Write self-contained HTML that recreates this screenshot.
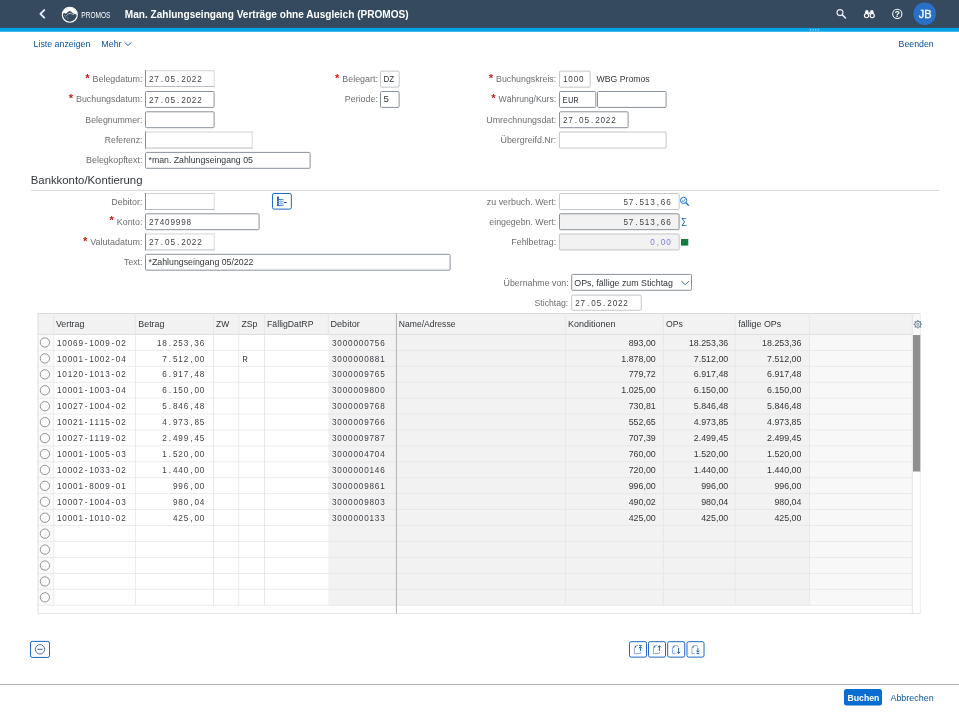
<!DOCTYPE html>
<html lang="de"><head><meta charset="utf-8"><title>Man. Zahlungseingang Verträge ohne Ausgleich (PROMOS)</title>
<style>
html,body{margin:0;padding:0;background:#fff;}
body{width:959px;height:719px;overflow:hidden;font-family:"Liberation Sans",sans-serif;font-size:9px;}
svg{display:block;position:absolute;left:0;top:0;will-change:transform;}
text{white-space:pre;}
</style></head>
<body>
<svg width="959" height="719" viewBox="0 0 959 719">
<rect x="0" y="0" width="959" height="28" fill="#354a5f"/>
<rect x="0" y="27.9" width="959" height="3.85" fill="#06a2e6"/>
<rect x="809.9" y="28.8" width="1.15" height="2" fill="#7cc8ff"/>
<rect x="812.52" y="28.8" width="1.15" height="2" fill="#7cc8ff"/>
<rect x="815.14" y="28.8" width="1.15" height="2" fill="#7cc8ff"/>
<rect x="817.76" y="28.8" width="1.15" height="2" fill="#7cc8ff"/>
<path d="M44.2 10.1 L40.4 13.9 L44.2 17.7" fill="none" stroke="#e3f0ff" stroke-width="1.9" stroke-linecap="round" stroke-linejoin="round"/>
<g transform="translate(61.6 6.5)">
<circle cx="8.2" cy="8.2" r="7.5" fill="none" stroke="#fff" stroke-width="1.1"/>
<path d="M0.95 7.4 A7.3 7.3 0 0 1 15.5 8.3 L15 7.9 L13.2 7.4 L11.2 6.4 L9.4 5 L8 4.4 L6.2 5.6 L4.4 7.3 L2.6 6.6 Z" fill="#fff"/>
<path d="M4.9 9 L6.6 7.6 L8.6 6.7 L10.4 7.6 L12.4 8" fill="none" stroke="#dfe8f2" stroke-width="0.7"/>
<path d="M2.4 8.4 L3.2 9.2 M5.6 11.4 L6.6 12 M3.6 10.6 L4.6 9.8" fill="none" stroke="#c9d6e4" stroke-width="0.7"/>
</g>
<text y="18.2" font-family="Liberation Sans" font-size="9.6" fill="#fff" x="81.35" textLength="29.1" lengthAdjust="spacingAndGlyphs">PROMOS</text>
<text y="17.6" font-family="Liberation Sans" font-size="10.3" fill="#fff" font-weight="bold" x="124.75" textLength="283.9" lengthAdjust="spacingAndGlyphs">Man. Zahlungseingang Verträge ohne Ausgleich (PROMOS)</text>
<g fill="none" stroke="#e8f0f8"><circle cx="840" cy="12.6" r="3.0" stroke-width="1.1"/><path d="M842.3 14.9 L845.5 18.0" stroke-width="1.5" stroke-linecap="round"/></g>
<g fill="#fff" stroke="none"><path d="M865.6 10.2 h2.6 l0.5 3.4 h-3.9 Z M870.5 10.2 h2.6 l0.8 3.4 h-3.9 Z"/><rect x="868.4" y="12.4" width="1.9" height="1.6"/></g>
<g fill="none" stroke="#fff" stroke-width="1.15"><circle cx="866.5" cy="15.6" r="2.1"/><circle cx="872.2" cy="15.6" r="2.1"/></g>
<circle cx="897.3" cy="13.9" r="4.6" fill="none" stroke="#fff" stroke-width="1.05"/>
<text y="16.9" font-family="Liberation Sans" font-size="8.4" fill="#fff" font-weight="bold" x="894.85">?</text>
<circle cx="924.7" cy="13.8" r="11.3" fill="#2a70c6"/>
<text y="17.9" font-family="Liberation Sans" font-size="11" fill="#fff" x="918.65" textLength="12.9" lengthAdjust="spacingAndGlyphs" stroke="#fff" stroke-width="0.3">JB</text>
<text y="46.5" font-family="Liberation Sans" font-size="9" fill="#0854a0" x="33.55" textLength="56.8" lengthAdjust="spacingAndGlyphs">Liste anzeigen</text>
<text y="46.5" font-family="Liberation Sans" font-size="9" fill="#0854a0" x="101.3" textLength="20.25" lengthAdjust="spacingAndGlyphs">Mehr</text>
<path d="M124.6 42.3 L128 45.6 L131.4 42.3" fill="none" stroke="#0854a0" stroke-width="0.9"/>
<text y="46.5" font-family="Liberation Sans" font-size="9" fill="#0854a0" x="898.55" textLength="35.1" lengthAdjust="spacingAndGlyphs">Beenden</text>
<text y="82.1" font-family="Liberation Sans" font-size="9" fill="#6a6d70" x="92.55" textLength="49.9" lengthAdjust="spacingAndGlyphs">Belegdatum:</text>
<text transform="translate(85.15 81.8) scale(0.999 1)" font-family="Liberation Sans" font-size="11.2" font-weight="bold" fill="#cc1919">*</text>
<rect x="145" y="70.3" width="69.6" height="16.6" fill="#fff"/>
<rect x="145" y="70.3" width="69.6" height="0.9" fill="#cbcdd0"/>
<rect x="213.7" y="70.3" width="0.9" height="16.6" fill="#d3d5d8"/>
<rect x="145" y="86" width="69.6" height="0.9" fill="#b3b7bb"/>
<rect x="145" y="70.3" width="1" height="16.6" fill="#868c93"/>
<text transform="translate(149 81.8) scale(0.88 1)" y="0" x="2.62 8.7 14.78 20.86 26.94 33.02 39.1 45.18 51.26 57.34" text-anchor="middle" font-family="Liberation Sans" font-size="9.3" fill="#3b3f44">27.05.2022</text>
<text y="102.4" font-family="Liberation Sans" font-size="9" fill="#6a6d70" x="76.05" textLength="66.4" lengthAdjust="spacingAndGlyphs">Buchungsdatum:</text>
<text transform="translate(68.65 102.1) scale(0.999 1)" font-family="Liberation Sans" font-size="11.2" font-weight="bold" fill="#cc1919">*</text>
<rect x="145.5" y="91.5" width="68.6" height="15.9" rx="1" fill="#fff" stroke="#89919a" stroke-width="1"/>
<text transform="translate(149 102.5) scale(0.88 1)" y="0" x="2.62 8.7 14.78 20.86 26.94 33.02 39.1 45.18 51.26 57.34" text-anchor="middle" font-family="Liberation Sans" font-size="9.3" fill="#3b3f44">27.05.2022</text>
<text y="122.7" font-family="Liberation Sans" font-size="9" fill="#6a6d70" x="85.3" textLength="57.15" lengthAdjust="spacingAndGlyphs">Belegnummer:</text>
<rect x="145.5" y="111.8" width="68.6" height="15.9" rx="1" fill="#fff" stroke="#89919a" stroke-width="1"/>
<text y="143" font-family="Liberation Sans" font-size="9" fill="#6a6d70" x="104.8" textLength="37.65" lengthAdjust="spacingAndGlyphs">Referenz:</text>
<rect x="145" y="131.6" width="107.6" height="16.9" fill="#fff"/>
<rect x="145" y="131.6" width="107.6" height="0.9" fill="#cbcdd0"/>
<rect x="251.7" y="131.6" width="0.9" height="16.9" fill="#d3d5d8"/>
<rect x="145" y="147.6" width="107.6" height="0.9" fill="#b3b7bb"/>
<rect x="145" y="131.6" width="1" height="16.9" fill="#868c93"/>
<text y="163.3" font-family="Liberation Sans" font-size="9" fill="#6a6d70" x="86.05" textLength="56.4" lengthAdjust="spacingAndGlyphs">Belegkopftext:</text>
<rect x="145.5" y="152.4" width="164.6" height="15.9" rx="1" fill="#fff" stroke="#89919a" stroke-width="1"/>
<text y="163.2" font-family="Liberation Sans" font-size="9" fill="#32363a" x="148.55" textLength="104.3" lengthAdjust="spacingAndGlyphs">*man. Zahlungseingang 05</text>
<text y="82.1" font-family="Liberation Sans" font-size="9" fill="#6a6d70" x="342.3" textLength="35.65" lengthAdjust="spacingAndGlyphs">Belegart:</text>
<text transform="translate(334.9 81.8) scale(0.999 1)" font-family="Liberation Sans" font-size="11.2" font-weight="bold" fill="#cc1919">*</text>
<rect x="380.45" y="71.15" width="18.7" height="16" rx="1" fill="#fff" stroke="#bcbfc3" stroke-width="0.9"/>
<text y="82" font-family="Liberation Sans" font-size="9" fill="#32363a" x="383.55" textLength="10.65" lengthAdjust="spacingAndGlyphs">DZ</text>
<text y="102.4" font-family="Liberation Sans" font-size="9" fill="#6a6d70" x="344.8" textLength="33.15" lengthAdjust="spacingAndGlyphs">Periode:</text>
<rect x="380.5" y="91.5" width="18.6" height="15.9" rx="1" fill="#fff" stroke="#89919a" stroke-width="1"/>
<text y="102.3" font-family="Liberation Sans" font-size="9" fill="#32363a" x="383.55" textLength="5.4" lengthAdjust="spacingAndGlyphs">5</text>
<text y="82.1" font-family="Liberation Sans" font-size="9" fill="#6a6d70" x="496.05" textLength="60.15" lengthAdjust="spacingAndGlyphs">Buchungskreis:</text>
<text transform="translate(488.65 81.8) scale(0.999 1)" font-family="Liberation Sans" font-size="11.2" font-weight="bold" fill="#cc1919">*</text>
<rect x="559.45" y="71.15" width="30.7" height="16" rx="1" fill="#fff" stroke="#bcbfc3" stroke-width="0.9"/>
<text transform="translate(563 82.2) scale(0.88 1)" y="0" x="2.62 8.7 14.78 20.86" text-anchor="middle" font-family="Liberation Sans" font-size="9.3" fill="#3b3f44">1000</text>
<text y="82.1" font-family="Liberation Sans" font-size="9" fill="#32363a" x="596.55" textLength="53.15" lengthAdjust="spacingAndGlyphs">WBG Promos</text>
<text y="102.4" font-family="Liberation Sans" font-size="9" fill="#6a6d70" x="498.55" textLength="57.65" lengthAdjust="spacingAndGlyphs">Währung/Kurs:</text>
<text transform="translate(491.15 102.1) scale(0.999 1)" font-family="Liberation Sans" font-size="11.2" font-weight="bold" fill="#cc1919">*</text>
<rect x="559.5" y="91.5" width="36.3" height="15.9" rx="1" fill="#fff" stroke="#89919a" stroke-width="1"/>
<text y="102.5" font-family="Liberation Mono" font-size="9.6" fill="#3b3f44" x="562.55" textLength="16.2" lengthAdjust="spacingAndGlyphs">EUR</text>
<rect x="597.5" y="91.5" width="68.6" height="15.9" rx="1" fill="#fff" stroke="#89919a" stroke-width="1"/>
<text y="122.7" font-family="Liberation Sans" font-size="9" fill="#6a6d70" x="486.3" textLength="69.9" lengthAdjust="spacingAndGlyphs">Umrechnungsdat:</text>
<rect x="559.5" y="111.8" width="68.6" height="15.9" rx="1" fill="#fff" stroke="#89919a" stroke-width="1"/>
<text transform="translate(563 122.8) scale(0.88 1)" y="0" x="2.62 8.7 14.78 20.86 26.94 33.02 39.1 45.18 51.26 57.34" text-anchor="middle" font-family="Liberation Sans" font-size="9.3" fill="#3b3f44">27.05.2022</text>
<text y="143" font-family="Liberation Sans" font-size="9" fill="#6a6d70" x="500.55" textLength="55.65" lengthAdjust="spacingAndGlyphs">Übergreifd.Nr:</text>
<rect x="559.45" y="132.05" width="106.7" height="16" rx="1" fill="#fff" stroke="#bcbfc3" stroke-width="0.9"/>
<text y="183.8" font-family="Liberation Sans" font-size="11.3" fill="#32363a" x="30.75" textLength="111.7" lengthAdjust="spacingAndGlyphs">Bankkonto/Kontierung</text>
<rect x="31" y="189.9" width="908.5" height="1" fill="#d9d9d9"/>
<text y="204.5" font-family="Liberation Sans" font-size="9" fill="#6a6d70" x="111.3" textLength="31.15" lengthAdjust="spacingAndGlyphs">Debitor:</text>
<rect x="145" y="193.1" width="69.6" height="16.9" fill="#fff"/>
<rect x="145" y="193.1" width="69.6" height="0.9" fill="#cbcdd0"/>
<rect x="213.7" y="193.1" width="0.9" height="16.9" fill="#d3d5d8"/>
<rect x="145" y="209.1" width="69.6" height="0.9" fill="#b3b7bb"/>
<rect x="145" y="193.1" width="1" height="16.9" fill="#868c93"/>
<text y="224.7" font-family="Liberation Sans" font-size="9" fill="#6a6d70" x="116.85" textLength="25.6" lengthAdjust="spacingAndGlyphs">Konto:</text>
<text transform="translate(109.45 224.4) scale(0.999 1)" font-family="Liberation Sans" font-size="11.2" font-weight="bold" fill="#cc1919">*</text>
<rect x="145.5" y="213.8" width="113.6" height="15.9" rx="1" fill="#fff" stroke="#89919a" stroke-width="1"/>
<text transform="translate(149 224.8) scale(0.88 1)" y="0" x="2.62 8.7 14.78 20.86 26.94 33.02 39.1 45.18" text-anchor="middle" font-family="Liberation Sans" font-size="9.3" fill="#3b3f44">27409998</text>
<text y="244.9" font-family="Liberation Sans" font-size="9" fill="#6a6d70" x="90.3" textLength="52.15" lengthAdjust="spacingAndGlyphs">Valutadatum:</text>
<text transform="translate(82.9 244.6) scale(0.999 1)" font-family="Liberation Sans" font-size="11.2" font-weight="bold" fill="#cc1919">*</text>
<rect x="145" y="233.5" width="69.6" height="16.9" fill="#fff"/>
<rect x="145" y="233.5" width="69.6" height="0.9" fill="#cbcdd0"/>
<rect x="213.7" y="233.5" width="0.9" height="16.9" fill="#d3d5d8"/>
<rect x="145" y="249.5" width="69.6" height="0.9" fill="#b3b7bb"/>
<rect x="145" y="233.5" width="1" height="16.9" fill="#868c93"/>
<text transform="translate(149 245) scale(0.88 1)" y="0" x="2.62 8.7 14.78 20.86 26.94 33.02 39.1 45.18 51.26 57.34" text-anchor="middle" font-family="Liberation Sans" font-size="9.3" fill="#3b3f44">27.05.2022</text>
<text y="265.2" font-family="Liberation Sans" font-size="9" fill="#6a6d70" x="124.05" textLength="18.4" lengthAdjust="spacingAndGlyphs">Text:</text>
<rect x="145.5" y="254.3" width="304.6" height="15.9" rx="1" fill="#fff" stroke="#89919a" stroke-width="1"/>
<text y="265.1" font-family="Liberation Sans" font-size="9" fill="#32363a" x="148.55" textLength="104.9" lengthAdjust="spacingAndGlyphs">*Zahlungseingang 05/2022</text>
<rect x="272.48" y="193.47" width="18.85" height="15.65" rx="1.7" fill="#fff" stroke="#0f5fc0" stroke-width="0.95"/>
<g><rect x="277.1" y="196.5" width="1.7" height="9.5" fill="#0b55a8"/><rect x="277.1" y="199.0" width="6.3" height="0.9" fill="#2a6cc0"/><rect x="277.1" y="201.2" width="6.3" height="0.8" fill="#7fa6dc"/><rect x="277.1" y="203.3" width="6.3" height="0.8" fill="#7fa6dc"/><rect x="277.1" y="205.2" width="6.3" height="0.9" fill="#2a6cc0"/><rect x="280.6" y="199.0" width="0.8" height="7" fill="#7fa6dc"/><rect x="282.7" y="199.0" width="0.7" height="7" fill="#9dbce6"/><rect x="284.0" y="202.0" width="2.6" height="1.0" fill="#2b3fc0"/></g>
<text y="204.5" font-family="Liberation Sans" font-size="9" fill="#6a6d70" x="486.8" textLength="69.4" lengthAdjust="spacingAndGlyphs">zu verbuch. Wert:</text>
<rect x="559.45" y="193.55" width="119.7" height="16" rx="1" fill="#fff" stroke="#bcbfc3" stroke-width="0.9"/>
<text transform="translate(623.4 204.6) scale(0.88 1)" y="0" x="2.62 8.7 14.78 20.86 26.94 33.02 39.1 45.18 51.26" text-anchor="middle" font-family="Liberation Sans" font-size="9.3" fill="#3b3f44">57.513,66</text>
<text y="224.7" font-family="Liberation Sans" font-size="9" fill="#6a6d70" x="489.3" textLength="66.9" lengthAdjust="spacingAndGlyphs">eingegebn. Wert:</text>
<rect x="559.5" y="213.8" width="119.6" height="15.9" rx="1" fill="#f2f2f2" stroke="#89919a" stroke-width="1"/>
<text transform="translate(623.4 224.8) scale(0.88 1)" y="0" x="2.62 8.7 14.78 20.86 26.94 33.02 39.1 45.18 51.26" text-anchor="middle" font-family="Liberation Sans" font-size="9.3" fill="#3b3f44">57.513,66</text>
<text y="244.9" font-family="Liberation Sans" font-size="9" fill="#6a6d70" x="511.3" textLength="44.9" lengthAdjust="spacingAndGlyphs">Fehlbetrag:</text>
<rect x="559.45" y="233.95" width="119.7" height="16" rx="1" fill="#f2f2f2" stroke="#bcbfc3" stroke-width="0.9"/>
<text transform="translate(650.15 245) scale(0.88 1)" y="0" x="2.62 8.7 14.78 20.86" text-anchor="middle" font-family="Liberation Sans" font-size="9.3" fill="#7d7de0">0,00</text>
<g fill="none" stroke="#0a6ed1"><circle cx="683.6" cy="200.4" r="3.1" stroke-width="1"/><path d="M686 202.8 L688.8 205.6" stroke-width="1.3"/><path d="M682 200.6 L683.2 201.6 L685.2 199.2" stroke-width="0.8"/></g>
<text y="225.9" font-family="Liberation Sans" font-size="10.2" fill="#1a5fb0" x="681.15" textLength="5.7" lengthAdjust="spacingAndGlyphs">Σ</text>
<rect x="681" y="239" width="7.3" height="6.6" fill="#107e3e"/>
<text y="285.8" font-family="Liberation Sans" font-size="9" fill="#6a6d70" x="503.55" textLength="65.15" lengthAdjust="spacingAndGlyphs">Übernahme von:</text>
<rect x="571.7" y="274.4" width="119.8" height="15.9" rx="1" fill="#fff" stroke="#89919a" stroke-width="1"/>
<text y="285.8" font-family="Liberation Sans" font-size="9" fill="#32363a" x="574.3" textLength="98.65" lengthAdjust="spacingAndGlyphs">OPs, fällige zum Stichtag</text>
<path d="M681.5 281.2 L685.2 284.7 L688.9 281.2" fill="none" stroke="#3f5b84" stroke-width="0.95"/>
<text y="305.9" font-family="Liberation Sans" font-size="9" fill="#6a6d70" x="534.55" textLength="33.65" lengthAdjust="spacingAndGlyphs">Stichtag:</text>
<rect x="571.65" y="295.15" width="69.6" height="15.1" rx="1" fill="#fff" stroke="#bcbfc3" stroke-width="0.9"/>
<text transform="translate(575.2 306.2) scale(0.88 1)" y="0" x="2.62 8.7 14.78 20.86 26.94 33.02 39.1 45.18 51.26 57.34" text-anchor="middle" font-family="Liberation Sans" font-size="9.3" fill="#3b3f44">27.05.2022</text>
<rect x="37.5" y="313" width="874.8" height="21.4" fill="#f2f2f2"/>
<rect x="37.5" y="334.4" width="16.3" height="270.81" fill="#fafafa"/>
<rect x="912.3" y="313" width="8" height="21.4" fill="#f8f8f8"/>
<rect x="328.3" y="334.4" width="481" height="270.81" fill="#f2f2f2"/>
<rect x="809.3" y="334.4" width="103" height="270.81" fill="#f8f8f8"/>
<rect x="37.5" y="313" width="882.8" height="1" fill="#d9d9d9"/>
<rect x="37.5" y="333.9" width="874.8" height="1" fill="#dedede"/>
<rect x="37.5" y="349.93" width="874.8" height="0.8" fill="#e6e6e6"/>
<rect x="37.5" y="365.86" width="874.8" height="0.8" fill="#e6e6e6"/>
<rect x="37.5" y="381.79" width="874.8" height="0.8" fill="#e6e6e6"/>
<rect x="37.5" y="397.72" width="874.8" height="0.8" fill="#e6e6e6"/>
<rect x="37.5" y="413.65" width="874.8" height="0.8" fill="#e6e6e6"/>
<rect x="37.5" y="429.58" width="874.8" height="0.8" fill="#e6e6e6"/>
<rect x="37.5" y="445.51" width="874.8" height="0.8" fill="#e6e6e6"/>
<rect x="37.5" y="461.44" width="874.8" height="0.8" fill="#e6e6e6"/>
<rect x="37.5" y="477.37" width="874.8" height="0.8" fill="#e6e6e6"/>
<rect x="37.5" y="493.3" width="874.8" height="0.8" fill="#e6e6e6"/>
<rect x="37.5" y="509.23" width="874.8" height="0.8" fill="#e6e6e6"/>
<rect x="37.5" y="525.16" width="874.8" height="0.8" fill="#e6e6e6"/>
<rect x="37.5" y="541.09" width="874.8" height="0.8" fill="#e6e6e6"/>
<rect x="37.5" y="557.02" width="874.8" height="0.8" fill="#e6e6e6"/>
<rect x="37.5" y="572.95" width="874.8" height="0.8" fill="#e6e6e6"/>
<rect x="37.5" y="588.88" width="874.8" height="0.8" fill="#e6e6e6"/>
<rect x="37.5" y="604.81" width="874.8" height="0.8" fill="#e6e6e6"/>
<rect x="37.5" y="613" width="882.8" height="1" fill="#e5e5e5"/>
<rect x="37.5" y="313" width="1" height="300.5" fill="#e0e0e0"/>
<rect x="53.4" y="313" width="0.8" height="292.21" fill="#e4e4e4"/>
<rect x="134.9" y="313" width="0.8" height="292.21" fill="#e4e4e4"/>
<rect x="213" y="313" width="0.8" height="292.21" fill="#e4e4e4"/>
<rect x="238.4" y="313" width="0.8" height="292.21" fill="#e4e4e4"/>
<rect x="264" y="313" width="0.8" height="292.21" fill="#e4e4e4"/>
<rect x="327.8" y="313" width="1" height="21.4" fill="#e5e5e5"/>
<rect x="395.9" y="313" width="1.1" height="300.5" fill="#b8b8b8"/>
<rect x="564.9" y="313" width="0.8" height="292.21" fill="#e4e4e4"/>
<rect x="662.9" y="313" width="0.8" height="292.21" fill="#e4e4e4"/>
<rect x="734.7" y="313" width="0.8" height="292.21" fill="#e4e4e4"/>
<rect x="808.9" y="313" width="0.8" height="292.21" fill="#e4e4e4"/>
<rect x="911.8" y="313" width="1" height="300.5" fill="#e5e5e5"/>
<rect x="919.8" y="313" width="1" height="300.5" fill="#ececec"/>
<text y="326.7" font-family="Liberation Sans" font-size="9" fill="#32363a" x="55.95" textLength="28.4" lengthAdjust="spacingAndGlyphs">Vertrag</text>
<text y="326.7" font-family="Liberation Sans" font-size="9" fill="#32363a" x="138.3" textLength="26.15" lengthAdjust="spacingAndGlyphs">Betrag</text>
<text y="326.7" font-family="Liberation Sans" font-size="9" fill="#32363a" x="216.05" textLength="13.15" lengthAdjust="spacingAndGlyphs">ZW</text>
<text y="326.7" font-family="Liberation Sans" font-size="9" fill="#32363a" x="241.55" textLength="15.9" lengthAdjust="spacingAndGlyphs">ZSp</text>
<text y="326.7" font-family="Liberation Sans" font-size="9" fill="#32363a" x="267.05" textLength="46.4" lengthAdjust="spacingAndGlyphs">FälligDatRP</text>
<text y="326.7" font-family="Liberation Sans" font-size="9" fill="#32363a" x="330.55" textLength="29.15" lengthAdjust="spacingAndGlyphs">Debitor</text>
<text y="326.7" font-family="Liberation Sans" font-size="9" fill="#32363a" x="398.8" textLength="56.65" lengthAdjust="spacingAndGlyphs">Name/Adresse</text>
<text y="326.7" font-family="Liberation Sans" font-size="9" fill="#32363a" x="568.05" textLength="47.4" lengthAdjust="spacingAndGlyphs">Konditionen</text>
<text y="326.7" font-family="Liberation Sans" font-size="9" fill="#32363a" x="666.05" textLength="16.9" lengthAdjust="spacingAndGlyphs">OPs</text>
<text y="326.7" font-family="Liberation Sans" font-size="9" fill="#32363a" x="738.3" textLength="42.9" lengthAdjust="spacingAndGlyphs">fällige OPs</text>
<g fill="none" stroke="#6a7d92"><circle cx="917.8" cy="324.3" r="3" stroke-width="1"/><circle cx="917.8" cy="324.3" r="1.1" stroke-width="0.8"/><path d="M917.8 320 v1.2 M917.8 327.4 v1.2 M913.5 324.3 h1.2 M920.9 324.3 h1.2 M914.8 321.3 l0.8 0.8 M920 326.5 l0.8 0.8 M914.8 327.3 l0.8 -0.8 M920 322.1 l0.8 -0.8" stroke-width="1.1"/></g>
<rect x="913" y="335" width="7.3" height="136.5" fill="#8f8f8f"/>
<circle cx="44.9" cy="342.5" r="4.65" fill="#fff" stroke="#81868c" stroke-width="0.9"/>
<text transform="translate(57 345.6) scale(0.88 1)" y="0" x="2.62 8.7 14.78 20.86 26.94 33.02 39.1 45.18 51.26 57.34 63.41 69.49 75.57" text-anchor="middle" font-family="Liberation Sans" font-size="9.3" fill="#3b3f44">10069-1009-02</text>
<text transform="translate(156.9 345.6) scale(0.88 1)" y="0" x="2.62 8.7 14.78 20.86 26.94 33.02 39.1 45.18 51.26" text-anchor="middle" font-family="Liberation Sans" font-size="9.3" fill="#3b3f44">18.253,36</text>
<text transform="translate(332 345.6) scale(0.88 1)" y="0" x="2.62 8.7 14.78 20.86 26.94 33.02 39.1 45.18 51.26 57.34" text-anchor="middle" font-family="Liberation Sans" font-size="9.3" fill="#3b3f44">3000000756</text>
<text y="345.6" font-family="Liberation Sans" font-size="8.85" fill="#32363a" x="655.75" text-anchor="end">893,00</text>
<text y="345.6" font-family="Liberation Sans" font-size="8.85" fill="#32363a" x="728.25" text-anchor="end">18.253,36</text>
<text y="345.6" font-family="Liberation Sans" font-size="8.85" fill="#32363a" x="801.45" text-anchor="end">18.253,36</text>
<circle cx="44.9" cy="358.43" r="4.65" fill="#fff" stroke="#81868c" stroke-width="0.9"/>
<text transform="translate(57 361.53) scale(0.88 1)" y="0" x="2.62 8.7 14.78 20.86 26.94 33.02 39.1 45.18 51.26 57.34 63.41 69.49 75.57" text-anchor="middle" font-family="Liberation Sans" font-size="9.3" fill="#3b3f44">10001-1002-04</text>
<text transform="translate(162.25 361.53) scale(0.88 1)" y="0" x="2.62 8.7 14.78 20.86 26.94 33.02 39.1 45.18" text-anchor="middle" font-family="Liberation Sans" font-size="9.3" fill="#3b3f44">7.512,00</text>
<text y="361.53" font-family="Liberation Mono" font-size="9.6" fill="#3b3f44" x="242.15" textLength="5.5" lengthAdjust="spacingAndGlyphs">R</text>
<text transform="translate(332 361.53) scale(0.88 1)" y="0" x="2.62 8.7 14.78 20.86 26.94 33.02 39.1 45.18 51.26 57.34" text-anchor="middle" font-family="Liberation Sans" font-size="9.3" fill="#3b3f44">3000000881</text>
<text y="361.53" font-family="Liberation Sans" font-size="8.85" fill="#32363a" x="655.75" text-anchor="end">1.878,00</text>
<text y="361.53" font-family="Liberation Sans" font-size="8.85" fill="#32363a" x="728.25" text-anchor="end">7.512,00</text>
<text y="361.53" font-family="Liberation Sans" font-size="8.85" fill="#32363a" x="801.45" text-anchor="end">7.512,00</text>
<circle cx="44.9" cy="374.36" r="4.65" fill="#fff" stroke="#81868c" stroke-width="0.9"/>
<text transform="translate(57 377.46) scale(0.88 1)" y="0" x="2.62 8.7 14.78 20.86 26.94 33.02 39.1 45.18 51.26 57.34 63.41 69.49 75.57" text-anchor="middle" font-family="Liberation Sans" font-size="9.3" fill="#3b3f44">10120-1013-02</text>
<text transform="translate(162.25 377.46) scale(0.88 1)" y="0" x="2.62 8.7 14.78 20.86 26.94 33.02 39.1 45.18" text-anchor="middle" font-family="Liberation Sans" font-size="9.3" fill="#3b3f44">6.917,48</text>
<text transform="translate(332 377.46) scale(0.88 1)" y="0" x="2.62 8.7 14.78 20.86 26.94 33.02 39.1 45.18 51.26 57.34" text-anchor="middle" font-family="Liberation Sans" font-size="9.3" fill="#3b3f44">3000009765</text>
<text y="377.46" font-family="Liberation Sans" font-size="8.85" fill="#32363a" x="655.75" text-anchor="end">779,72</text>
<text y="377.46" font-family="Liberation Sans" font-size="8.85" fill="#32363a" x="728.25" text-anchor="end">6.917,48</text>
<text y="377.46" font-family="Liberation Sans" font-size="8.85" fill="#32363a" x="801.45" text-anchor="end">6.917,48</text>
<circle cx="44.9" cy="390.29" r="4.65" fill="#fff" stroke="#81868c" stroke-width="0.9"/>
<text transform="translate(57 393.39) scale(0.88 1)" y="0" x="2.62 8.7 14.78 20.86 26.94 33.02 39.1 45.18 51.26 57.34 63.41 69.49 75.57" text-anchor="middle" font-family="Liberation Sans" font-size="9.3" fill="#3b3f44">10001-1003-04</text>
<text transform="translate(162.25 393.39) scale(0.88 1)" y="0" x="2.62 8.7 14.78 20.86 26.94 33.02 39.1 45.18" text-anchor="middle" font-family="Liberation Sans" font-size="9.3" fill="#3b3f44">6.150,00</text>
<text transform="translate(332 393.39) scale(0.88 1)" y="0" x="2.62 8.7 14.78 20.86 26.94 33.02 39.1 45.18 51.26 57.34" text-anchor="middle" font-family="Liberation Sans" font-size="9.3" fill="#3b3f44">3000009800</text>
<text y="393.39" font-family="Liberation Sans" font-size="8.85" fill="#32363a" x="655.75" text-anchor="end">1.025,00</text>
<text y="393.39" font-family="Liberation Sans" font-size="8.85" fill="#32363a" x="728.25" text-anchor="end">6.150,00</text>
<text y="393.39" font-family="Liberation Sans" font-size="8.85" fill="#32363a" x="801.45" text-anchor="end">6.150,00</text>
<circle cx="44.9" cy="406.22" r="4.65" fill="#fff" stroke="#81868c" stroke-width="0.9"/>
<text transform="translate(57 409.32) scale(0.88 1)" y="0" x="2.62 8.7 14.78 20.86 26.94 33.02 39.1 45.18 51.26 57.34 63.41 69.49 75.57" text-anchor="middle" font-family="Liberation Sans" font-size="9.3" fill="#3b3f44">10027-1004-02</text>
<text transform="translate(162.25 409.32) scale(0.88 1)" y="0" x="2.62 8.7 14.78 20.86 26.94 33.02 39.1 45.18" text-anchor="middle" font-family="Liberation Sans" font-size="9.3" fill="#3b3f44">5.846,48</text>
<text transform="translate(332 409.32) scale(0.88 1)" y="0" x="2.62 8.7 14.78 20.86 26.94 33.02 39.1 45.18 51.26 57.34" text-anchor="middle" font-family="Liberation Sans" font-size="9.3" fill="#3b3f44">3000009768</text>
<text y="409.32" font-family="Liberation Sans" font-size="8.85" fill="#32363a" x="655.75" text-anchor="end">730,81</text>
<text y="409.32" font-family="Liberation Sans" font-size="8.85" fill="#32363a" x="728.25" text-anchor="end">5.846,48</text>
<text y="409.32" font-family="Liberation Sans" font-size="8.85" fill="#32363a" x="801.45" text-anchor="end">5.846,48</text>
<circle cx="44.9" cy="422.15" r="4.65" fill="#fff" stroke="#81868c" stroke-width="0.9"/>
<text transform="translate(57 425.25) scale(0.88 1)" y="0" x="2.62 8.7 14.78 20.86 26.94 33.02 39.1 45.18 51.26 57.34 63.41 69.49 75.57" text-anchor="middle" font-family="Liberation Sans" font-size="9.3" fill="#3b3f44">10021-1115-02</text>
<text transform="translate(162.25 425.25) scale(0.88 1)" y="0" x="2.62 8.7 14.78 20.86 26.94 33.02 39.1 45.18" text-anchor="middle" font-family="Liberation Sans" font-size="9.3" fill="#3b3f44">4.973,85</text>
<text transform="translate(332 425.25) scale(0.88 1)" y="0" x="2.62 8.7 14.78 20.86 26.94 33.02 39.1 45.18 51.26 57.34" text-anchor="middle" font-family="Liberation Sans" font-size="9.3" fill="#3b3f44">3000009766</text>
<text y="425.25" font-family="Liberation Sans" font-size="8.85" fill="#32363a" x="655.75" text-anchor="end">552,65</text>
<text y="425.25" font-family="Liberation Sans" font-size="8.85" fill="#32363a" x="728.25" text-anchor="end">4.973,85</text>
<text y="425.25" font-family="Liberation Sans" font-size="8.85" fill="#32363a" x="801.45" text-anchor="end">4.973,85</text>
<circle cx="44.9" cy="438.08" r="4.65" fill="#fff" stroke="#81868c" stroke-width="0.9"/>
<text transform="translate(57 441.18) scale(0.88 1)" y="0" x="2.62 8.7 14.78 20.86 26.94 33.02 39.1 45.18 51.26 57.34 63.41 69.49 75.57" text-anchor="middle" font-family="Liberation Sans" font-size="9.3" fill="#3b3f44">10027-1119-02</text>
<text transform="translate(162.25 441.18) scale(0.88 1)" y="0" x="2.62 8.7 14.78 20.86 26.94 33.02 39.1 45.18" text-anchor="middle" font-family="Liberation Sans" font-size="9.3" fill="#3b3f44">2.499,45</text>
<text transform="translate(332 441.18) scale(0.88 1)" y="0" x="2.62 8.7 14.78 20.86 26.94 33.02 39.1 45.18 51.26 57.34" text-anchor="middle" font-family="Liberation Sans" font-size="9.3" fill="#3b3f44">3000009787</text>
<text y="441.18" font-family="Liberation Sans" font-size="8.85" fill="#32363a" x="655.75" text-anchor="end">707,39</text>
<text y="441.18" font-family="Liberation Sans" font-size="8.85" fill="#32363a" x="728.25" text-anchor="end">2.499,45</text>
<text y="441.18" font-family="Liberation Sans" font-size="8.85" fill="#32363a" x="801.45" text-anchor="end">2.499,45</text>
<circle cx="44.9" cy="454.01" r="4.65" fill="#fff" stroke="#81868c" stroke-width="0.9"/>
<text transform="translate(57 457.11) scale(0.88 1)" y="0" x="2.62 8.7 14.78 20.86 26.94 33.02 39.1 45.18 51.26 57.34 63.41 69.49 75.57" text-anchor="middle" font-family="Liberation Sans" font-size="9.3" fill="#3b3f44">10001-1005-03</text>
<text transform="translate(162.25 457.11) scale(0.88 1)" y="0" x="2.62 8.7 14.78 20.86 26.94 33.02 39.1 45.18" text-anchor="middle" font-family="Liberation Sans" font-size="9.3" fill="#3b3f44">1.520,00</text>
<text transform="translate(332 457.11) scale(0.88 1)" y="0" x="2.62 8.7 14.78 20.86 26.94 33.02 39.1 45.18 51.26 57.34" text-anchor="middle" font-family="Liberation Sans" font-size="9.3" fill="#3b3f44">3000004704</text>
<text y="457.11" font-family="Liberation Sans" font-size="8.85" fill="#32363a" x="655.75" text-anchor="end">760,00</text>
<text y="457.11" font-family="Liberation Sans" font-size="8.85" fill="#32363a" x="728.25" text-anchor="end">1.520,00</text>
<text y="457.11" font-family="Liberation Sans" font-size="8.85" fill="#32363a" x="801.45" text-anchor="end">1.520,00</text>
<circle cx="44.9" cy="469.94" r="4.65" fill="#fff" stroke="#81868c" stroke-width="0.9"/>
<text transform="translate(57 473.04) scale(0.88 1)" y="0" x="2.62 8.7 14.78 20.86 26.94 33.02 39.1 45.18 51.26 57.34 63.41 69.49 75.57" text-anchor="middle" font-family="Liberation Sans" font-size="9.3" fill="#3b3f44">10002-1033-02</text>
<text transform="translate(162.25 473.04) scale(0.88 1)" y="0" x="2.62 8.7 14.78 20.86 26.94 33.02 39.1 45.18" text-anchor="middle" font-family="Liberation Sans" font-size="9.3" fill="#3b3f44">1.440,00</text>
<text transform="translate(332 473.04) scale(0.88 1)" y="0" x="2.62 8.7 14.78 20.86 26.94 33.02 39.1 45.18 51.26 57.34" text-anchor="middle" font-family="Liberation Sans" font-size="9.3" fill="#3b3f44">3000000146</text>
<text y="473.04" font-family="Liberation Sans" font-size="8.85" fill="#32363a" x="655.75" text-anchor="end">720,00</text>
<text y="473.04" font-family="Liberation Sans" font-size="8.85" fill="#32363a" x="728.25" text-anchor="end">1.440,00</text>
<text y="473.04" font-family="Liberation Sans" font-size="8.85" fill="#32363a" x="801.45" text-anchor="end">1.440,00</text>
<circle cx="44.9" cy="485.87" r="4.65" fill="#fff" stroke="#81868c" stroke-width="0.9"/>
<text transform="translate(57 488.97) scale(0.88 1)" y="0" x="2.62 8.7 14.78 20.86 26.94 33.02 39.1 45.18 51.26 57.34 63.41 69.49 75.57" text-anchor="middle" font-family="Liberation Sans" font-size="9.3" fill="#3b3f44">10001-8009-01</text>
<text transform="translate(172.95 488.97) scale(0.88 1)" y="0" x="2.62 8.7 14.78 20.86 26.94 33.02" text-anchor="middle" font-family="Liberation Sans" font-size="9.3" fill="#3b3f44">996,00</text>
<text transform="translate(332 488.97) scale(0.88 1)" y="0" x="2.62 8.7 14.78 20.86 26.94 33.02 39.1 45.18 51.26 57.34" text-anchor="middle" font-family="Liberation Sans" font-size="9.3" fill="#3b3f44">3000009861</text>
<text y="488.97" font-family="Liberation Sans" font-size="8.85" fill="#32363a" x="655.75" text-anchor="end">996,00</text>
<text y="488.97" font-family="Liberation Sans" font-size="8.85" fill="#32363a" x="728.25" text-anchor="end">996,00</text>
<text y="488.97" font-family="Liberation Sans" font-size="8.85" fill="#32363a" x="801.45" text-anchor="end">996,00</text>
<circle cx="44.9" cy="501.8" r="4.65" fill="#fff" stroke="#81868c" stroke-width="0.9"/>
<text transform="translate(57 504.9) scale(0.88 1)" y="0" x="2.62 8.7 14.78 20.86 26.94 33.02 39.1 45.18 51.26 57.34 63.41 69.49 75.57" text-anchor="middle" font-family="Liberation Sans" font-size="9.3" fill="#3b3f44">10007-1004-03</text>
<text transform="translate(172.95 504.9) scale(0.88 1)" y="0" x="2.62 8.7 14.78 20.86 26.94 33.02" text-anchor="middle" font-family="Liberation Sans" font-size="9.3" fill="#3b3f44">980,04</text>
<text transform="translate(332 504.9) scale(0.88 1)" y="0" x="2.62 8.7 14.78 20.86 26.94 33.02 39.1 45.18 51.26 57.34" text-anchor="middle" font-family="Liberation Sans" font-size="9.3" fill="#3b3f44">3000009803</text>
<text y="504.9" font-family="Liberation Sans" font-size="8.85" fill="#32363a" x="655.75" text-anchor="end">490,02</text>
<text y="504.9" font-family="Liberation Sans" font-size="8.85" fill="#32363a" x="728.25" text-anchor="end">980,04</text>
<text y="504.9" font-family="Liberation Sans" font-size="8.85" fill="#32363a" x="801.45" text-anchor="end">980,04</text>
<circle cx="44.9" cy="517.73" r="4.65" fill="#fff" stroke="#81868c" stroke-width="0.9"/>
<text transform="translate(57 520.83) scale(0.88 1)" y="0" x="2.62 8.7 14.78 20.86 26.94 33.02 39.1 45.18 51.26 57.34 63.41 69.49 75.57" text-anchor="middle" font-family="Liberation Sans" font-size="9.3" fill="#3b3f44">10001-1010-02</text>
<text transform="translate(172.95 520.83) scale(0.88 1)" y="0" x="2.62 8.7 14.78 20.86 26.94 33.02" text-anchor="middle" font-family="Liberation Sans" font-size="9.3" fill="#3b3f44">425,00</text>
<text transform="translate(332 520.83) scale(0.88 1)" y="0" x="2.62 8.7 14.78 20.86 26.94 33.02 39.1 45.18 51.26 57.34" text-anchor="middle" font-family="Liberation Sans" font-size="9.3" fill="#3b3f44">3000000133</text>
<text y="520.83" font-family="Liberation Sans" font-size="8.85" fill="#32363a" x="655.75" text-anchor="end">425,00</text>
<text y="520.83" font-family="Liberation Sans" font-size="8.85" fill="#32363a" x="728.25" text-anchor="end">425,00</text>
<text y="520.83" font-family="Liberation Sans" font-size="8.85" fill="#32363a" x="801.45" text-anchor="end">425,00</text>
<circle cx="44.9" cy="533.66" r="4.65" fill="#fff" stroke="#81868c" stroke-width="0.9"/>
<circle cx="44.9" cy="549.59" r="4.65" fill="#fff" stroke="#81868c" stroke-width="0.9"/>
<circle cx="44.9" cy="565.52" r="4.65" fill="#fff" stroke="#81868c" stroke-width="0.9"/>
<circle cx="44.9" cy="581.45" r="4.65" fill="#fff" stroke="#81868c" stroke-width="0.9"/>
<circle cx="44.9" cy="597.38" r="4.65" fill="#fff" stroke="#81868c" stroke-width="0.9"/>
<rect x="30.48" y="641.38" width="19.05" height="16.05" rx="1.7" fill="#fff" stroke="#0f5fc0" stroke-width="0.95"/>
<g fill="none" stroke="#3b62a6"><circle cx="40" cy="649.3" r="4.7" stroke-width="0.9"/><path d="M37.3 649.3 H42.6" stroke-width="1"/></g>
<rect x="629.48" y="641.68" width="17.05" height="15.45" rx="1.7" fill="#fff" stroke="#0f5fc0" stroke-width="0.95"/>
<g transform="translate(633 644.4)" fill="none" stroke-width="0.9"><path d="M1 3.1 L3.2 0.9 V3.1 Z" fill="#0b55a8" stroke="none"/><path d="M3.2 1.2 H5.2 M1.4 3.2 V9.2 H7.4 V7.6" stroke="#7aa2dc"/><path d="M7.4 6.6 V2.4 M5.9 3.8 L7.4 2.2 L8.9 3.8 M6 1 H8.8" stroke="#0854a0"/></g>
<rect x="648.48" y="641.68" width="17.05" height="15.45" rx="1.7" fill="#fff" stroke="#0f5fc0" stroke-width="0.95"/>
<g transform="translate(652 644.4)" fill="none" stroke-width="0.9"><path d="M1 3.1 L3.2 0.9 V3.1 Z" fill="#0b55a8" stroke="none"/><path d="M3.2 1.2 H5.2 M1.4 3.2 V9.2 H7.4 V7.6" stroke="#7aa2dc"/><path d="M7.4 6.6 V1.4 M5.9 3 L7.4 1.3 L8.9 3" stroke="#0854a0"/></g>
<rect x="667.68" y="641.68" width="17.05" height="15.45" rx="1.7" fill="#fff" stroke="#0f5fc0" stroke-width="0.95"/>
<g transform="translate(671.2 644.4)" fill="none" stroke-width="0.9"><path d="M1 3.1 L3.2 0.9 V3.1 Z" fill="#0b55a8" stroke="none"/><path d="M4.4 9.2 H1.4 V3.2 M3.2 1.2 H5.6 Q7.2 1.2 7.2 3" stroke="#7aa2dc"/><path d="M7.4 3.6 V9 M5.9 7.4 L7.4 9.1 L8.9 7.4" stroke="#0854a0"/></g>
<rect x="686.98" y="641.68" width="17.05" height="15.45" rx="1.7" fill="#fff" stroke="#0f5fc0" stroke-width="0.95"/>
<g transform="translate(690.5 644.4)" fill="none" stroke-width="0.9"><path d="M1 3.1 L3.2 0.9 V3.1 Z" fill="#0b55a8" stroke="none"/><path d="M4.4 9.2 H1.4 V3.2 M3.2 1.2 H5.6 Q7.2 1.2 7.2 3" stroke="#7aa2dc"/><path d="M7.4 3.6 V7.8 M5.9 6.2 L7.4 7.8 L8.9 6.2 M6 9.2 H8.8" stroke="#0854a0"/></g>
<rect x="0" y="683.95" width="959" height="1.1" fill="#b3b3b3"/>
<rect x="844" y="689" width="38" height="16.6" rx="2.5" fill="#0a6ed1"/>
<text y="700.5" font-family="Liberation Sans" font-size="9" fill="#fff" font-weight="bold" x="847.45" textLength="32" lengthAdjust="spacingAndGlyphs">Buchen</text>
<text y="700.5" font-family="Liberation Sans" font-size="9" fill="#0854a0" x="890.45" textLength="43.25" lengthAdjust="spacingAndGlyphs">Abbrechen</text>
</svg>
</body></html>
